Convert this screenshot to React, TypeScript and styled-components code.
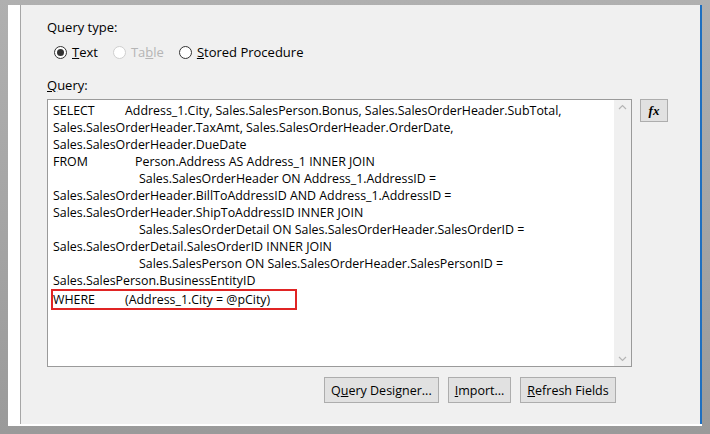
import React from 'react';
import styled, { createGlobalStyle } from 'styled-components';

const Global = createGlobalStyle`
  html, body { margin: 0; padding: 0; background: #a0a0a0; }
  body { font-family: "Segoe UI", "Open Sans", "Liberation Sans", sans-serif; font-size: 12px; color: #000; }
`;

const Frame = styled.div`
  width: 710px;
  height: 434px;
  box-sizing: border-box;
  padding: 5px 0 0 8px;
  background: linear-gradient(#b0b0b0, #9a9a9a);
  display: flex;
`;

const Inner = styled.div`
  flex: 1;
  display: flex;
  background: #fff;
  padding: 0 0 2px 12px;
  margin-bottom: 8px;
  margin-right: 8px;
`;

const Panel = styled.div`
  flex: 1;
  background: #f0f0f0;
  border-left: 1px solid #a6a6a6;
  border-right: 2px solid #1e6fc0;
  padding: 13px 0 0 26px;
  display: flex;
  flex-direction: column;
`;

const Label = styled.div`
  font-size: 13px;
  height: 18px;
`;

const RadioRow = styled.div`
  display: flex;
  align-items: center;
  gap: 15px;
  margin: 6px 0 0 7px;
  height: 20px;
`;

const Radio = styled.label<{ $disabled?: boolean }>`
  display: flex;
  align-items: center;
  gap: 5px;
  font-size: 13px;
  color: ${p => (p.$disabled ? '#b5b5b5' : '#000')};
`;

const Dot = styled.span<{ $checked?: boolean; $disabled?: boolean }>`
  width: 11px;
  height: 11px;
  border-radius: 50%;
  border: 1px solid ${p => (p.$disabled ? '#cfcfcf' : '#333')};
  background: #fff;
  display: flex;
  align-items: center;
  justify-content: center;
  &::after {
    content: '';
    width: 7px;
    height: 7px;
    border-radius: 50%;
    background: ${p => (p.$checked ? '#333' : 'transparent')};
  }
`;

const QueryLabel = styled(Label)`
  margin-top: 14px;
`;

const EditRow = styled.div`
  display: flex;
  gap: 8px;
  margin-top: 5px;
`;

const Editor = styled.div`
  width: 585px;
  height: 268px;
  box-sizing: border-box;
  border: 1px solid #9a9a9a;
  background: #fff;
  display: flex;
`;

const Code = styled.div`
  flex: 1;
  padding: 2px 0 0 5px;
  font-size: 12.4px;
  line-height: 17px;
  white-space: pre;
`;

const Line = styled.div<{ $indent?: number }>`
  padding-left: ${p => p.$indent ?? 0}px;
`;

const Tab = styled.span<{ $w: number }>`
  display: inline-block;
  width: ${p => p.$w}px;
`;

const Highlight = styled.div`
  display: inline-block;
  border: 2px solid #e02424;
  margin-left: -2px;
  width: 242px;
  line-height: 17px;
`;

const Scroll = styled.div`
  width: 17px;
  background: #f0f0f0;
  display: flex;
  flex-direction: column;
  justify-content: space-between;
  align-items: center;
  padding: 4px 0;
`;

const FxButton = styled.button`
  width: 28px;
  height: 23px;
  border: 1px solid #adadad;
  background: #e1e1e1;
  font-family: "Liberation Serif", serif;
  font-style: italic;
  font-weight: bold;
  font-size: 13px;
  padding: 0;
`;

const ButtonRow = styled.div`
  display: flex;
  gap: 9px;
  margin: 10px 0 0 277px;
`;

const Button = styled.button`
  height: 26px;
  padding: 0 6px;
  border: 1px solid #adadad;
  background: #e1e1e1;
  font-family: inherit;
  font-size: 12.5px;
`;

const U = styled.span`text-decoration: underline;`;

const Chevron = ({ up }: { up?: boolean }) => (
  <svg width="9" height="6" viewBox="0 0 9 6">
    <path d={up ? 'M1 5 L4.5 1.5 L8 5' : 'M1 1 L4.5 4.5 L8 1'} stroke="#b5b5b5" fill="none" strokeWidth="1.2" />
  </svg>
);

export default function App() {
  return (
    <>
      <Global />
      <Frame>
        <Inner>
          <Panel>
            <Label>Query type:</Label>
            <RadioRow>
              <Radio><Dot $checked /><span><U>T</U>ext</span></Radio>
              <Radio $disabled><Dot $disabled /><span>Ta<U>b</U>le</span></Radio>
              <Radio><Dot /><span><U>S</U>tored Procedure</span></Radio>
            </RadioRow>
            <QueryLabel><U>Q</U>uery:</QueryLabel>
            <EditRow>
              <Editor>
                <Code>
                  <Line><Tab $w={72}>SELECT</Tab>Address_1.City, Sales.SalesPerson.Bonus, Sales.SalesOrderHeader.SubTotal,</Line>
                  <Line>Sales.SalesOrderHeader.TaxAmt, Sales.SalesOrderHeader.OrderDate,</Line>
                  <Line>Sales.SalesOrderHeader.DueDate</Line>
                  <Line><Tab $w={82}>FROM</Tab>Person.Address AS Address_1 INNER JOIN</Line>
                  <Line $indent={86}>Sales.SalesOrderHeader ON Address_1.AddressID =</Line>
                  <Line>Sales.SalesOrderHeader.BillToAddressID AND Address_1.AddressID =</Line>
                  <Line>Sales.SalesOrderHeader.ShipToAddressID INNER JOIN</Line>
                  <Line $indent={86}>Sales.SalesOrderDetail ON Sales.SalesOrderHeader.SalesOrderID =</Line>
                  <Line>Sales.SalesOrderDetail.SalesOrderID INNER JOIN</Line>
                  <Line $indent={86}>Sales.SalesPerson ON Sales.SalesOrderHeader.SalesPersonID =</Line>
                  <Line>Sales.SalesPerson.BusinessEntityID</Line>
                  <Highlight><Tab $w={72}>WHERE</Tab>(Address_1.City = @pCity)</Highlight>
                </Code>
                <Scroll><Chevron up /><Chevron /></Scroll>
              </Editor>
              <FxButton>fx</FxButton>
            </EditRow>
            <ButtonRow>
              <Button>Q<U>u</U>ery Designer...</Button>
              <Button><U>I</U>mport...</Button>
              <Button><U>R</U>efresh Fields</Button>
            </ButtonRow>
          </Panel>
        </Inner>
      </Frame>
    </>
  );
}
